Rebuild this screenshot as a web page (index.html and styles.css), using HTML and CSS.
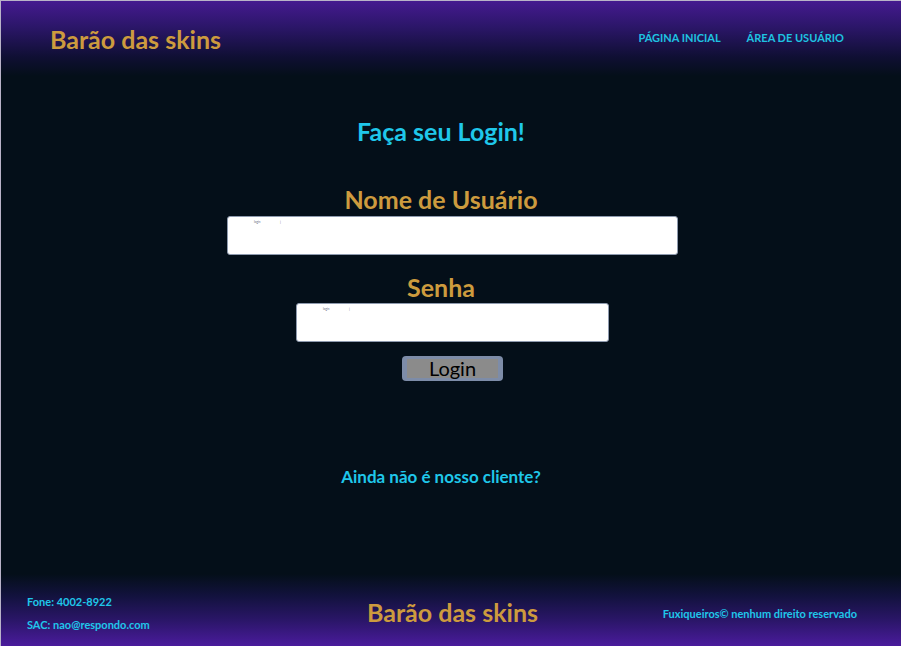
FILE: index.html
```html
<!DOCTYPE html>
<html lang="pt-BR">
<head>
<meta charset="utf-8">
<title>Barão das skins</title>
<link rel="stylesheet" href="styles.css">
</head>
<body>
<div class="page">
  <header class="header">
    <h1 class="brand">Barão das skins</h1>
    <nav class="nav">
      <a href="#" class="nav-link">PÁGINA INICIAL</a>
      <a href="#" class="nav-link">ÁREA DE USUÁRIO</a>
    </nav>
  </header>
  <main class="main">
    <h2 class="title">Faça seu Login!</h2>
    <form class="form">
      <label class="label">Nome de Usuário</label>
      <div class="input input-user"><span class="ph">login</span><span class="ph ph2">|</span></div>
      <label class="label label-senha">Senha</label>
      <div class="input input-pass"><span class="ph">login</span><span class="ph ph2">|</span></div>
      <button type="button" class="btn"><span class="btn-inner">Login</span></button>
    </form>
    <a href="#" class="signup">Ainda não é nosso cliente?</a>
  </main>
  <footer class="footer">
    <div class="contact">
      <p class="contact-line">Fone: 4002-8922</p>
      <p class="contact-line">SAC: nao@respondo.com</p>
    </div>
    <div class="foot-brand">Barão das skins</div>
    <div class="copy">Fuxiqueiros© nenhum direito reservado</div>
  </footer>
</div>
</body>
</html>
```

FILE: styles.css
```css
* { box-sizing: border-box; }
html, body { margin: 0; padding: 0; height: 100%; }
body {
  font-family: Lato, "Open Sans", sans-serif;
  background: #040f19;
}
.page {
  height: 646px;
  display: flex;
  flex-direction: column;
  border-top: 1px solid #b9b3c8;
  border-left: 1px solid #b9b3c8;
  background: #040f19;
}
.header {
  height: 75px;
  flex: none;
  display: flex;
  align-items: center;
  justify-content: space-between;
  padding: 0 57px 0 49px;
  background: linear-gradient(to bottom, #451a90 0%, #2b1668 35%, #0f0f33 75%, #040f19 100%);
}
.brand {
  margin: 0 0 -1px;
  font-size: 25px;
  font-weight: 700;
  color: #cd9b3e;
}
.nav { display: flex; gap: 26px; margin-bottom: 3px; }
.nav-link {
  color: #1ec3e1;
  font-size: 11px;
  font-weight: 700;
  text-decoration: none;
}
.main {
  flex: 1;
  display: flex;
  flex-direction: column;
  align-items: center;
  padding-top: 40px;
  padding-right: 20px;
}
.title {
  margin: 0;
  font-size: 25px;
  font-weight: 700;
  color: #1fc7ea;
}
.form {
  display: flex;
  flex-direction: column;
  align-items: center;
  margin-top: 39px;
}
.label {
  font-size: 25px;
  font-weight: 700;
  color: #cd9b3e;
  line-height: 29px;
}
.label-senha { margin-top: 18px; }
.input {
  background: #fff;
  border: 1px solid #8e9aae;
  border-radius: 3px;
  height: 39px;
  margin-top: 2px;
  position: relative;
}
.input-user { width: 451px; margin-left: 23px; }
.input-pass { width: 313px; margin-left: 23px; margin-top: 1px; }
.ph {
  position: absolute;
  top: 3px;
  left: 26px;
  font-size: 3px;
  color: #667;
}
.ph2 { left: 52px; }
.btn {
  margin-top: 14px;
  margin-left: 23px;
  width: 101px;
  height: 25px;
  padding: 3px 5px;
  border: none;
  border-radius: 4px;
  background: #7d8ca8;
  font-family: Lato, sans-serif;
  display: flex;
}
.btn-inner {
  flex: 1;
  background: #8b8b8b;
  color: #000;
  font-size: 20px;
  line-height: 18px;
}
.signup {
  margin-top: 85px;
  color: #1fc7ea;
  font-size: 17px;
  font-weight: 700;
  text-decoration: none;
}
.footer {
  height: 72px;
  flex: none;
  display: flex;
  align-items: center;
  padding: 6px 44px 0 26px;
  background: linear-gradient(to bottom, #040f19 0%, #12123d 30%, #2b1669 65%, #4a1b9c 100%);
}
.contact { width: 340px; }
.contact-line {
  margin: 0;
  font-size: 11px;
  font-weight: 700;
  color: #1fc7ea;
  line-height: 23px;
}
.foot-brand {
  font-size: 25px;
  font-weight: 700;
  color: #cd9b3e;
  margin-top: -3px;
}
.copy {
  margin-left: auto;
  font-size: 11px;
  font-weight: 700;
  color: #1fc7ea;
}
```
